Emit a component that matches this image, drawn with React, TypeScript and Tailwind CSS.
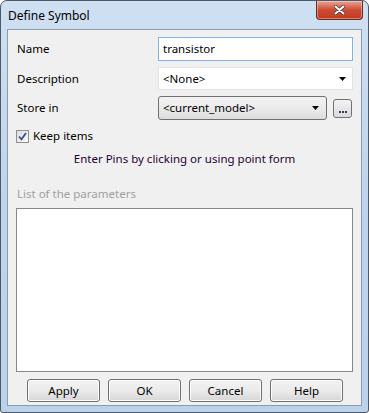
import { useState } from 'react'

const font = { fontFamily: '"Noto Sans", "Segoe UI", sans-serif' }

function Caret() {
  return (
    <svg width="7" height="4" viewBox="0 0 7 4" className="shrink-0">
      <path d="M0 0h7L3.5 4z" fill="#000" />
    </svg>
  )
}

function DlgButton({ label }: { label: string }) {
  return (
    <button className="h-[23px] w-[73px] rounded-[3px] border border-[#707070] bg-gradient-to-b from-[#f2f2f2] via-[#ebebeb] to-[#d6d6d6] text-[11.5px] text-black leading-none shadow-[inset_0_0_0_1px_#fcfcfc]">
      {label}
    </button>
  )
}

export default function App() {
  const [keep, setKeep] = useState(true)

  return (
    <div className="w-[369px] h-[413px] bg-white" style={font}>
      <div className="w-[369px] h-[413px] rounded-t-[7px] rounded-b-[3px] border border-[#4d5968] bg-gradient-to-b from-[#cfe0f2] via-[#bdd4ec] to-[#bad2ea] flex flex-col">
        {/* Title bar */}
        <div className="h-[28px] flex items-start justify-between">
          <span className="pl-[7px] pt-[6px] text-[12px] text-black">Define Symbol</span>
          <div className="mr-[5px] w-[47px] h-[19px] rounded-b-[4px] border border-t-0 border-[#6b2a20] bg-gradient-to-b from-[#e8a393] via-[#cd4a32] to-[#c43a22] flex items-center justify-center shadow-[inset_0_0_0_1px_rgba(255,255,255,0.35)]">
            <svg width="11" height="10" viewBox="0 0 11 10">
              <path d="M1.5 1.5l8 7M9.5 1.5l-8 7" stroke="#333" strokeWidth="3.2" strokeLinecap="round" />
              <path d="M1.5 1.5l8 7M9.5 1.5l-8 7" stroke="#fff" strokeWidth="2" strokeLinecap="round" />
            </svg>
          </div>
        </div>

        {/* Client area */}
        <div className="mx-[6px] h-[377px] border border-[#8d9bab] bg-[#f0f0f0] px-[8px] pt-[7px] text-[11.5px] text-black flex flex-col">
          <div className="flex items-center h-[24px]">
            <span className="w-[142px] pl-[1px]">Name</span>
            <div className="flex-1 h-[24px] border border-[#7eb4ea] bg-white flex items-center px-[4px]">
              transistor
            </div>
          </div>

          <div className="flex items-center h-[23px] mt-[6px]">
            <span className="w-[142px] pl-[1px]">Description</span>
            <div className="flex-1 h-[23px] border border-[#e3e3e3] bg-white flex items-center justify-between pl-[4px] pr-[6px]">
              <span>&lt;None&gt;</span>
              <Caret />
            </div>
          </div>

          <div className="flex items-center h-[24px] mt-[6px]">
            <span className="w-[142px] pl-[1px]">Store in</span>
            <div className="w-[169px] h-[24px] rounded-[3px] border border-[#707070] bg-gradient-to-b from-[#f2f2f2] via-[#ebebeb] to-[#dcdcdc] flex items-center justify-between pl-[4px] pr-[7px]">
              <span>&lt;current_model&gt;</span>
              <Caret />
            </div>
            <div className="ml-[6px] w-[19px] h-[19px] rounded-[3px] border border-[#707070] bg-gradient-to-b from-[#f2f2f2] to-[#dcdcdc] flex items-end justify-center pb-[4px]">
              <span className="flex gap-[1px]">
                <span className="w-[2px] h-[2px] bg-[#3a3a6a]" />
                <span className="w-[2px] h-[2px] bg-[#3a3a6a]" />
                <span className="w-[2px] h-[2px] bg-[#3a3a6a]" />
              </span>
            </div>
          </div>

          <label className="flex items-center h-[16px] mt-[8px] gap-[4px] cursor-default">
            <span
              onClick={() => setKeep(!keep)}
              className="w-[13px] h-[13px] border border-[#8f8f8f] bg-gradient-to-br from-[#dcdcdc] to-[#fafafa] flex items-center justify-center"
            >
              {keep && (
                <svg width="9" height="9" viewBox="0 0 9 9">
                  <path d="M1 4.5l2.5 2.8L8 1" stroke="#3a4f8c" strokeWidth="1.8" fill="none" />
                </svg>
              )}
            </span>
            <span>Keep items</span>
          </label>

          <div className="mt-[6px] h-[18px] text-center text-[#240030]">
            Enter Pins by clicking or using point form
          </div>

          <div className="mt-[17px] h-[17px] pl-[1px] text-[#a0a0a0]">List of the parameters</div>

          <div className="mt-[6px] h-[164px] border border-[#828790] bg-white" />

          <div className="mt-[7px] flex justify-center gap-[8px] pl-[1px]">
            <DlgButton label="Apply" />
            <DlgButton label="OK" />
            <DlgButton label="Cancel" />
            <DlgButton label="Help" />
          </div>
        </div>
      </div>
    </div>
  )
}
